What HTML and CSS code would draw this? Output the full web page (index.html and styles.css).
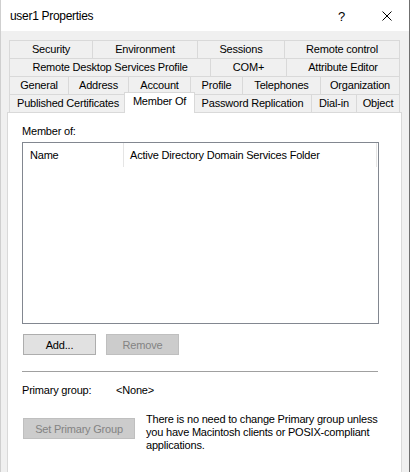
FILE: index.html
```html
<!DOCTYPE html>
<html>
<head>
<meta charset="utf-8">
<title>user1 Properties</title>
<link rel="stylesheet" href="styles.css">
</head>
<body>
<div class="window">
  <div class="titlebar">
    <span class="title">user1 Properties</span>
    <span class="help">?</span>
    <svg class="close" width="10" height="10" viewBox="0 0 10 10"><path d="M0.5 0.5 L9.5 9.5 M9.5 0.5 L0.5 9.5" stroke="#000" stroke-width="1" fill="none"/></svg>
  </div>
  <div class="client">
    <div class="tabs">
      <div class="row">
        <div class="tab w83">Security</div>
        <div class="tab w105">Environment</div>
        <div class="tab w87">Sessions</div>
        <div class="tab w116 last">Remote control</div>
      </div>
      <div class="row">
        <div class="tab w201">Remote Desktop Services Profile</div>
        <div class="tab w76">COM+</div>
        <div class="tab w114 last">Attribute Editor</div>
      </div>
      <div class="row">
        <div class="tab w59">General</div>
        <div class="tab w60">Address</div>
        <div class="tab w62">Account</div>
        <div class="tab w52">Profile</div>
        <div class="tab w78">Telephones</div>
        <div class="tab w80 last">Organization</div>
      </div>
      <div class="row">
        <div class="tab w117">Published Certificates</div>
        <div class="tab w67 selected">Member Of</div>
        <div class="tab w118">Password Replication</div>
        <div class="tab w45">Dial-in</div>
        <div class="tab w44 last">Object</div>
      </div>
    </div>
    <div class="panel">
      <div class="label">Member of:</div>
      <div class="listview">
        <div class="header">
          <div class="col col-name">Name</div>
          <div class="col col-folder">Active Directory Domain Services Folder</div>
        </div>
      </div>
      <div class="buttons">
        <button class="btn">Add...</button>
        <button class="btn disabled">Remove</button>
      </div>
      <div class="separator"></div>
      <div class="primary">
        <span class="pg-label">Primary group:</span>
        <span class="pg-value">&lt;None&gt;</span>
      </div>
      <div class="set-row">
        <button class="btn disabled btn-set">Set Primary Group</button>
        <div class="note">There is no need to change Primary group unless<br>you have Macintosh clients or POSIX-compliant<br>applications.</div>
      </div>
    </div>
  </div>
</div>
</body>
</html>
```

FILE: styles.css
```css
html, body {
  margin: 0;
  padding: 0;
  background: #ffffff;
}
body {
  width: 411px;
  height: 472px;
  overflow: hidden;
  font-family: "Liberation Sans", Arial, sans-serif;
  font-size: 11px;
  letter-spacing: -0.2px;
  color: #000;
}
.window {
  width: 408px;
  height: 472px;
  border-left: 1px solid #cfcfcf;
  border-right: 1px solid #6f6f6f;
  background: #f0f0f0;
  display: flex;
  flex-direction: column;
}
.titlebar {
  height: 31px;
  background: #ffffff;
  display: flex;
  align-items: center;
  flex: none;
}
.title {
  font-family: "Liberation Sans", Arial, sans-serif;
  font-size: 12px;
  letter-spacing: -0.3px;
  margin-left: 9px;
  flex: 1;
  padding-top: 1px;
}
.help {
  font-family: "Liberation Sans", Arial, sans-serif;
  font-size: 13px;
  margin-right: 37px;
  padding-top: 1px;
}
.close {
  margin-right: 17px;
  margin-top: 1px;
}
.client {
  flex: 1;
  display: flex;
  flex-direction: column;
  padding-top: 9px;
  min-height: 0;
}
.tabs {
  margin-left: 8px;
  width: 391px;
}
.row {
  display: flex;
  height: 18px;
}
.tab {
  box-sizing: border-box;
  height: 18px;
  border-top: 1px solid #d9d9d9;
  border-left: 1px solid #d9d9d9;
  background: #f0f0f0;
  text-align: center;
  line-height: 17px;
  white-space: nowrap;
  flex: none;
}
.tab.last {
  border-right: 1px solid #d9d9d9;
}
.tab.selected {
  position: relative;
  z-index: 1;
  background: #ffffff;
  height: 21px;
  margin: -2px -2px -1px -2px;
  width: 71px;
  border-right: 1px solid #d9d9d9;
  line-height: 16px;
}
.w44 { width: 44px; }
.w45 { width: 45px; }
.w52 { width: 52px; }
.w59 { width: 59px; }
.w60 { width: 60px; }
.w62 { width: 62px; }
.w67 { width: 67px; }
.w76 { width: 76px; }
.w78 { width: 78px; }
.w80 { width: 80px; }
.w83 { width: 83px; }
.w87 { width: 87px; }
.w105 { width: 105px; }
.w114 { width: 114px; }
.w116 { width: 116px; }
.w117 { width: 117px; }
.w118 { width: 118px; }
.w201 { width: 201px; }

.panel {
  margin-left: 6px;
  width: 395px;
  box-sizing: border-box;
  flex: 1;
  background: #ffffff;
  border: 1px solid #d9d9d9;
  border-bottom: none;
  padding: 12px 0 0 14px;
}
.label {
  height: 13px;
  line-height: 13px;
}
.listview {
  margin-top: 4px;
  width: 357px;
  height: 182px;
  box-sizing: border-box;
  border: 1px solid #828790;
  background: #ffffff;
}
.header {
  display: flex;
  height: 24px;
}
.col {
  box-sizing: border-box;
  height: 24px;
  line-height: 24px;
  border-right: 1px solid #e5e5e5;
  padding-left: 7px;
  white-space: nowrap;
}
.col-name { width: 101px; }
.col-folder { width: 253px; padding-left: 6px; }

.buttons {
  display: flex;
  gap: 10px;
  margin-top: 10px;
  margin-left: 1px;
}
.btn {
  box-sizing: border-box;
  width: 73px;
  height: 21px;
  margin: 0;
  padding: 0;
  background: #e1e1e1;
  border: 1px solid #adadad;
  font-family: "Liberation Sans", Arial, sans-serif;
  font-size: 11px;
  letter-spacing: -0.2px;
  color: #000;
}
.btn.disabled {
  background: #cccccc;
  border-color: #bfbfbf;
  color: #838383;
}
.separator {
  margin-top: 16px;
  width: 356px;
  height: 1px;
  background: #a0a0a0;
}
.primary {
  display: flex;
  margin-top: 12px;
  height: 13px;
  line-height: 13px;
}
.pg-label { width: 94px; }
.set-row {
  display: flex;
  margin-top: 21px;
}
.btn-set {
  width: 112px;
  margin-left: 1px;
}
.note {
  margin-left: 11px;
  margin-top: -5px;
  line-height: 13px;
  white-space: nowrap;
}
```
